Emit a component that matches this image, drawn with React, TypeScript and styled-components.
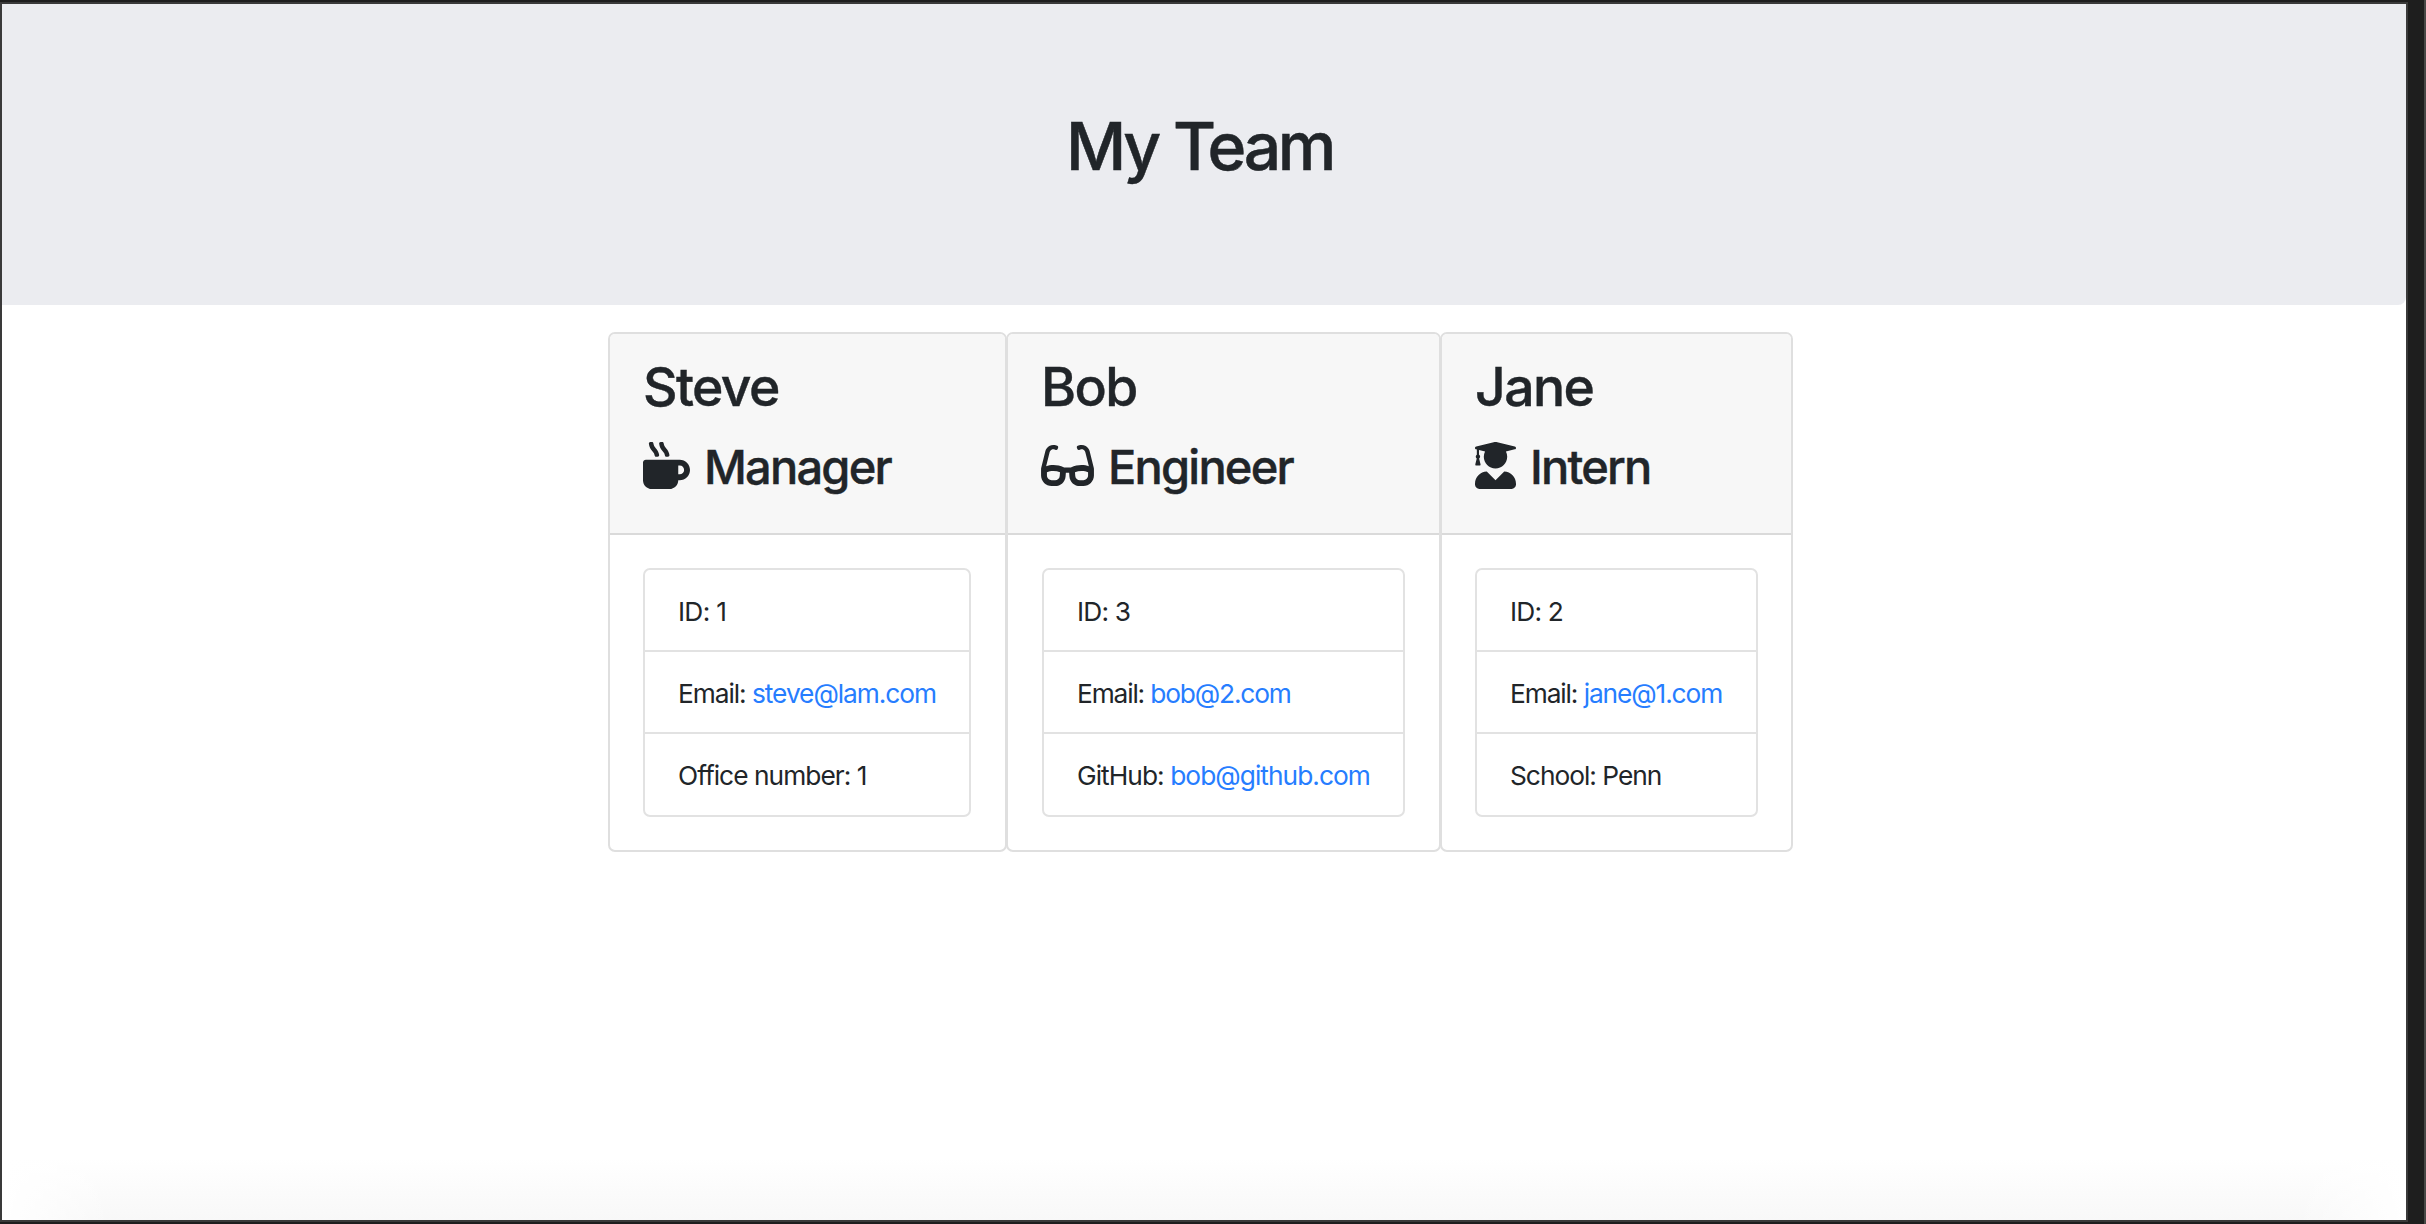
import React from "react";
import styled, { createGlobalStyle } from "styled-components";
import { FaGlasses, FaMugHot, FaUserGraduate } from "react-icons/fa";
import type { IconType } from "react-icons";

const GlobalStyle = createGlobalStyle`
  *, *::before, *::after { box-sizing: border-box; }
  body {
    margin: 0;
    background: #1e1e1e;
    color: #212529;
    font-family: Inter, "Liberation Sans", sans-serif;
    font-size: 26.3px;
  }
`;

const Desktop = styled.div`
  width: 2426px;
  height: 1224px;
  padding: 2px 16px 2px 0;
  background: #1e1e1e;
  border-right: 2px solid #484846;
  overflow: hidden;
`;

const Page = styled.div`
  height: 1220px;
  border: 2px solid #3a3a3a;
  background:
    linear-gradient(to right, #ffffff, rgba(255, 255, 255, 0) 110px, rgba(255, 255, 255, 0) calc(100% - 110px), #ffffff),
    linear-gradient(to top, #f8f8f8, #ffffff 62px);
`;

const Jumbotron = styled.header`
  height: 301px;
  padding: 101px 9px 0 0;
  background: #ebecf0;
  border-radius: 0 0 8px 0;
  text-align: center;
`;

const Title = styled.h1`
  margin: 0;
  font-size: 66px;
  line-height: 82px;
  font-weight: 500;
  letter-spacing: -3.4px;
  word-spacing: 1px;
  -webkit-text-stroke: 0.5px #212529;
`;

const Team = styled.main`
  display: flex;
  padding: 27px 0 0 606px;
`;

const Card = styled.section<{ $width: number }>`
  width: ${({ $width }) => $width}px;
  height: 520px;
  border: 2px solid #dfdfdf;
  border-radius: 7px;
  overflow: hidden;
  & + & { margin-left: -1px; }
`;

const CardHeader = styled.div`
  height: 201px;
  padding: 20px 0 0 33px;
  background: #f7f7f7;
  border-bottom: 2px solid #dadada;
`;

const Name = styled.h2`
  margin: 0;
  font-size: 53.5px;
  line-height: 66px;
  font-weight: 500;
  letter-spacing: -1.6px;
  -webkit-text-stroke: 0.4px #212529;
`;

const Role = styled.h3`
  display: flex;
  align-items: center;
  gap: 14px;
  margin: 19px 0 0;
  font-size: 47px;
  line-height: 56px;
  font-weight: 500;
  letter-spacing: -1.8px;
  -webkit-text-stroke: 0.4px #212529;
`;

const RoleIcon = styled.span<{ $width: number }>`
  display: flex;
  width: ${({ $width }) => $width}px;
  height: 47px;
  margin-bottom: 3px;
  svg { width: 100%; height: 100%; }
`;

const Facts = styled.ul<{ $width: number; $inset: number }>`
  width: ${({ $width }) => $width}px;
  margin: 33px 0 0 ${({ $inset }) => $inset}px;
  padding: 0;
  list-style: none;
  border: 2px solid #e2e2e2;
  border-radius: 7px;
`;

const Fact = styled.li`
  height: 82px;
  padding-left: 33px;
  line-height: 83px;
  white-space: nowrap;
  &:first-child { height: 80px; }
  &:last-child { height: 83px; }
  & + & { border-top: 2px solid #e2e2e2; }
`;

const FactText = styled.span<{ $spacing: number }>`
  letter-spacing: ${({ $spacing }) => $spacing}px;
`;

const Link = styled.a`
  color: #267dff;
  text-decoration: none;
`;

interface FactData { label: string; value: string; link?: boolean; spacing: number }
interface Member {
  name: string;
  role: string;
  icon: IconType;
  iconWidth: number;
  width: number;
  inset: number;
  listWidth: number;
  facts: FactData[];
}

const members: Member[] = [
  {
    name: "Steve", role: "Manager", icon: FaMugHot, iconWidth: 47,
    width: 399, inset: 33, listWidth: 328,
    facts: [
      { label: "ID", value: "1", spacing: -0.7 },
      { label: "Email", value: "steve@lam.com", link: true, spacing: -1.05 },
      { label: "Office number", value: "1", spacing: -0.95 },
    ],
  },
  {
    name: "Bob", role: "Engineer", icon: FaGlasses, iconWidth: 53,
    width: 435, inset: 34, listWidth: 363,
    facts: [
      { label: "ID", value: "3", spacing: -0.8 },
      { label: "Email", value: "bob@2.com", link: true, spacing: -1.15 },
      { label: "GitHub", value: "bob@github.com", link: true, spacing: -0.95 },
    ],
  },
  {
    name: "Jane", role: "Intern", icon: FaUserGraduate, iconWidth: 41,
    width: 353, inset: 33, listWidth: 283,
    facts: [
      { label: "ID", value: "2", spacing: -0.8 },
      { label: "Email", value: "jane@1.com", link: true, spacing: -1.1 },
      { label: "School", value: "Penn", spacing: -1 },
    ],
  },
];

export default function App() {
  return (
    <Desktop>
      <GlobalStyle />
      <Page>
        <Jumbotron>
          <Title>My Team</Title>
        </Jumbotron>
        <Team>
          {members.map(({ name, role, icon: Icon, iconWidth, width, inset, listWidth, facts }) => (
            <Card key={name} $width={width}>
              <CardHeader>
                <Name>{name}</Name>
                <Role>
                  <RoleIcon $width={iconWidth}><Icon /></RoleIcon>
                  {role}
                </Role>
              </CardHeader>
              <Facts $width={listWidth} $inset={inset}>
                {facts.map(({ label, value, link, spacing }) => (
                  <Fact key={label}>
                    <FactText $spacing={spacing}>
                      {label}: {link ? <Link href={`mailto:${value}`}>{value}</Link> : value}
                    </FactText>
                  </Fact>
                ))}
              </Facts>
            </Card>
          ))}
        </Team>
      </Page>
    </Desktop>
  );
}
